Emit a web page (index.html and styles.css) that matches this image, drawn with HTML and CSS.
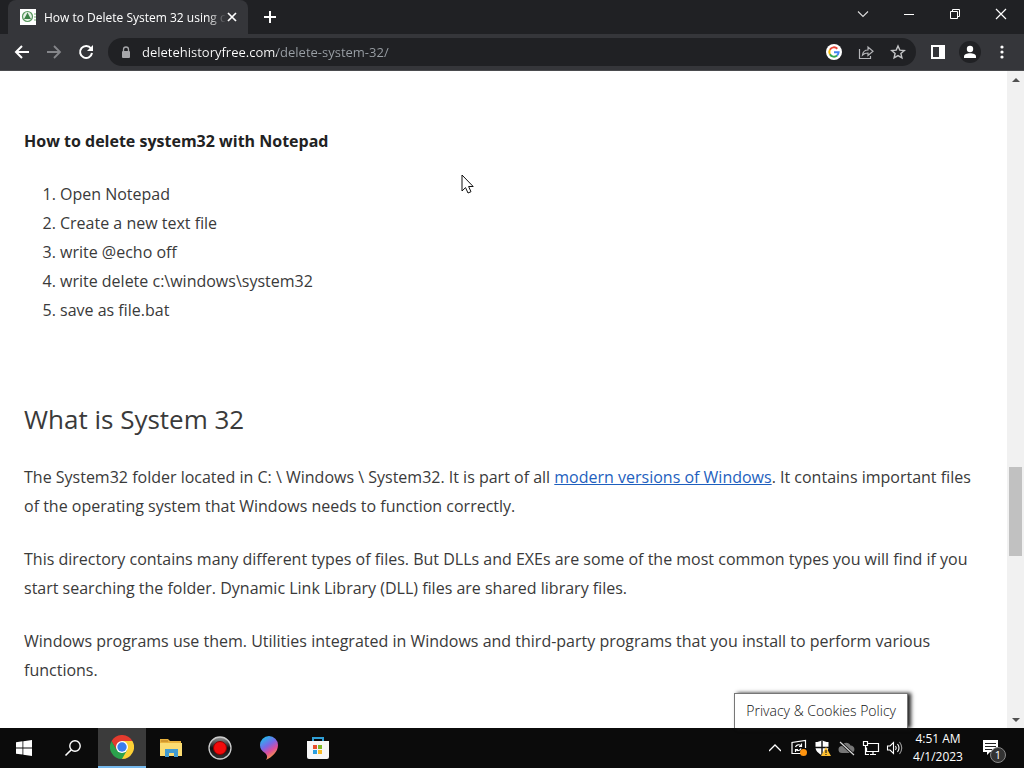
FILE: index.html
```html
<!DOCTYPE html>
<html lang="en">
<head>
    <meta charset="UTF-8">
    <meta name="viewport" content="width=device-width, initial-scale=1.0">
    <title>How to Delete System 32</title>
    <link rel="stylesheet" href="styles.css">
</head>
<body>
    <header class="tab-strip">
        <div class="tab">
            <svg class="favicon" width="16" height="16" viewBox="0 0 16 16">
                <rect width="16" height="16" fill="#fff"/>
                <circle cx="7.5" cy="7.5" r="5" fill="#e5f0e5" stroke="#5a9a60" stroke-width="1.2"/>
                <path d="M7.500 3.500L9 6.500l2 3.500H4l2-3.500z" fill="#3c8247"/>
                <path d="M15 4v8" stroke="#6fae6f" stroke-dasharray="2 1"/>
            </svg>
            <span class="tab-title">How to Delete System 32 using c</span>
            <button class="icon-button tab-close" aria-label="Close tab">
                <svg width="10" height="10" viewBox="0 0 10 10"><path d="M1 1l8 8M9 1L1 9" stroke="#fff" stroke-width="1.7"/></svg>
            </button>
        </div>
        <button class="icon-button new-tab" aria-label="New tab">
            <svg width="14" height="14" viewBox="0 0 14 14"><path d="M7 1v12M1 7h12" stroke="#fff" stroke-width="2"/></svg>
        </button>
        <div class="window-controls">
            <button class="icon-button" aria-label="Search tabs">
                <svg width="12" height="12" viewBox="0 0 12 12"><path d="M1 3.500l5 5 5-5" fill="none" stroke="#ddd" stroke-width="1.100"/></svg>
            </button>
            <button class="icon-button" aria-label="Minimize">
                <svg width="12" height="12" viewBox="0 0 12 12"><path d="M1 6.500h10" stroke="#fff"/></svg>
            </button>
            <button class="icon-button" aria-label="Restore">
                <svg width="12" height="12" viewBox="0 0 12 12"><path d="M1.500 3.500h7v7h-7zM3.500 3.500v-2h7v7h-2" fill="none" stroke="#fff"/></svg>
            </button>
            <button class="icon-button" aria-label="Close">
                <svg width="12" height="12" viewBox="0 0 12 12"><path d="M1 1l10 10M11 1L1 11" stroke="#fff" stroke-width="1.200"/></svg>
            </button>
        </div>
    </header>

    <nav class="toolbar">
        <button class="icon-button" aria-label="Back">
            <svg width="16" height="16" viewBox="0 0 16 16"><path d="M15 8H2M8 2L2 8l6 6" fill="none" stroke="#fff" stroke-width="2"/></svg>
        </button>
        <button class="icon-button" aria-label="Forward">
            <svg width="16" height="16" viewBox="0 0 16 16"><path d="M1 8h13M8 2l6 6-6 6" fill="none" stroke="#85868a" stroke-width="1.800"/></svg>
        </button>
        <button class="icon-button" aria-label="Reload">
            <svg width="16" height="16" viewBox="0 0 16 16"><path d="M13 4.500A6 6 0 1 0 14 9" fill="none" stroke="#fff" stroke-width="2"/><path d="M15 1v6H9z" fill="#fff"/></svg>
        </button>
        <div class="address-bar">
            <svg width="10" height="13" viewBox="0 0 10 13"><path d="M2.500 5V3.500a2.500 2.500 0 0 1 5 0V5" fill="none" stroke="#a6a7aa" stroke-width="1.300"/><rect x="1" y="5" width="8" height="7" rx="1" fill="#a6a7aa"/></svg>
            <input type="text" class="url" aria-label="Address" value="deletehistoryfree.com/delete-system-32/">
            <button class="icon-button" aria-label="Google">
                <svg width="16" height="16" viewBox="0 0 16 16">
                    <circle cx="8" cy="8" r="8" fill="#fff"/>
                    <g fill="none" stroke-width="2">
                        <path d="M11.300 4.700A4.700 4.700 0 0 0 3.900 5.700" stroke="#ea4335"/>
                        <path d="M3.900 5.700a4.700 4.700 0 0 0 0 4.600" stroke="#fbbc05"/>
                        <path d="M3.900 10.300a4.700 4.700 0 0 0 7.200 1.200" stroke="#34a853"/>
                        <path d="M11.100 11.500A4.700 4.700 0 0 0 12.600 8.300H8" stroke="#4285f4"/>
                    </g>
                </svg>
            </button>
            <button class="icon-button" aria-label="Share">
                <svg width="16" height="16" viewBox="0 0 16 16"><path d="M1.500 5v9.500h11V12M4.500 11c.5-3.500 2.500-5 5.500-5V3l5 4.300-5 4.200V9C7.500 9 6 9.500 4.500 11z" fill="none" stroke="#b5b6b9" stroke-width="1.200"/></svg>
            </button>
            <button class="icon-button" aria-label="Bookmark">
                <svg width="16" height="16" viewBox="0 0 16 16"><path d="M8 2l1.800 4.100 4.500.4-3.400 3 1 4.400L8 11.600l-3.900 2.300 1-4.400-3.400-3 4.500-.4z" fill="none" stroke="#c4c5c7" stroke-width="1.400"/></svg>
            </button>
        </div>
        <div class="toolbar-actions">
            <button class="icon-button" aria-label="Side panel">
                <svg width="16" height="16" viewBox="0 0 16 16"><path d="M1 1h14v14H1zM3 3v10h6V3z" fill="#fff" fill-rule="evenodd"/></svg>
            </button>
            <button class="icon-button profile" aria-label="Profile">
                <svg width="16" height="16" viewBox="0 0 16 16"><circle cx="8" cy="5" r="3.200" fill="#fff"/><path d="M2 14v-1.500C2 10.500 5 9.300 8 9.300s6 1.200 6 3.200V14z" fill="#fff"/></svg>
            </button>
            <button class="icon-button" aria-label="Menu">
                <svg width="16" height="16" viewBox="0 0 16 16"><g fill="#fff"><circle cx="8" cy="3" r="1.600"/><circle cx="8" cy="8" r="1.600"/><circle cx="8" cy="13" r="1.600"/></g></svg>
            </button>
        </div>
    </nav>

    <div class="viewport">
        <main class="article">
            <p><strong>How to delete system32 with Notepad</strong></p>
            <ol>
                <li>Open Notepad</li>
                <li>Create a new text file</li>
                <li>write @echo off</li>
                <li>write delete c:\windows\system32</li>
                <li>save as file.bat</li>
            </ol>
            <h2>What is System 32</h2>
            <p>The System32 folder located in C: \ Windows \ System32. It is part of all <a href="#">modern versions of Windows</a>. It contains important files of the operating system that Windows needs to function correctly.</p>
            <p>This directory contains many different types of files. But DLLs and EXEs are some of the most common types you will find if you start searching the folder. Dynamic Link Library (DLL) files are shared library files.</p>
            <p>Windows programs use them. Utilities integrated in Windows and third-party programs that you install to perform various functions.</p>
        </main>
        <div class="scrollbar">
            <button class="icon-button" aria-label="Scroll up">
                <svg width="8" height="4" viewBox="0 0 8 4"><path d="M0 4l4-4 4 4z" fill="#505050"/></svg>
            </button>
            <div class="track"><div class="thumb"></div></div>
            <button class="icon-button" aria-label="Scroll down">
                <svg width="8" height="4" viewBox="0 0 8 4"><path d="M0 0l4 4 4-4z" fill="#505050"/></svg>
            </button>
        </div>
        <button class="cookies">Privacy &amp; Cookies Policy</button>
        <svg class="cursor" width="13" height="20" viewBox="0 0 13 20"><path d="M1 1v16l3.500-3.400L7 19l3-1.300-2.400-5.200h4.600z" fill="#fff" stroke="#111"/></svg>
    </div>

    <footer class="taskbar">
        <button class="task" aria-label="Start">
            <svg width="16" height="16" viewBox="0 0 16 16"><path d="M0 2.200L6.500 1.300v6.200H0zM7.300 1.200L16 0v7.500H7.300zM0 8.400h6.500v6.200L0 13.700zM7.300 8.400H16V16l-8.700-1.200z" fill="#fff"/></svg>
        </button>
        <button class="task" aria-label="Search">
            <svg width="18" height="18" viewBox="0 0 18 18"><circle cx="11" cy="7" r="5.200" fill="none" stroke="#fff" stroke-width="1.400"/><path d="M7.300 10.700L1.500 16.500" stroke="#fff" stroke-width="1.600"/></svg>
        </button>
        <button class="task active" aria-label="Chrome">
            <svg width="24" height="24" viewBox="0 0 24 24">
                <path d="M12 12L1.600 6A12 12 0 0 1 22.400 6z" fill="#e33b2e"/>
                <path d="M12 12V6h10.400A12 12 0 0 1 12 24z" fill="#fdd035"/>
                <path d="M12 12l5.200 3L12 24A12 12 0 0 1 1.600 6l5.200 9z" fill="#2ba24c"/>
                <path d="M1.600 6h10.400v6l-5.200 3z" fill="#e33b2e"/>
                <circle cx="12" cy="12" r="6" fill="#fff"/>
                <circle cx="12" cy="12" r="4.700" fill="#3b7ded"/>
            </svg>
        </button>
        <button class="task" aria-label="File Explorer">
            <svg width="22" height="20" viewBox="0 0 22 20"><path d="M0 1h8l2 2h11v15H0z" fill="#e9b23c"/><path d="M0 5h22v13H0z" fill="#fbdc72"/><path d="M5 19v-8h13v8h-4v-4H9v4z" fill="#419bd1"/><path d="M1 3h7" stroke="#b97d22"/></svg>
        </button>
        <button class="task" aria-label="Recorder">
            <svg width="24" height="24" viewBox="0 0 24 24">
                <defs><linearGradient id="rec" x2="0" y2="1"><stop stop-color="#999"/><stop offset=".5" stop-color="#111"/><stop offset="1" stop-color="#333"/></linearGradient></defs>
                <circle cx="12" cy="12" r="11" fill="url(#rec)" stroke="#ccc" stroke-width="1.300"/>
                <circle cx="12" cy="12" r="6.500" fill="#f20b0b" stroke="#8f0000"/>
            </svg>
        </button>
        <button class="task" aria-label="Paint 3D">
            <svg width="20" height="24" viewBox="0 0 20 24">
                <defs><linearGradient id="paint" x1=".2" y1="0" x2=".7" y2="1"><stop stop-color="#19c3ee"/><stop offset=".4" stop-color="#7868e8"/><stop offset=".65" stop-color="#dd4c9b"/><stop offset="1" stop-color="#ffb52b"/></linearGradient></defs>
                <path d="M10 0a9 9 0 0 1 9 9c0 7-6 12-12 15 2-3 1-5-1-7-3-2-5-4-5-8a9 9 0 0 1 9-9z" fill="url(#paint)"/>
            </svg>
        </button>
        <button class="task" aria-label="Microsoft Store">
            <svg width="24" height="24" viewBox="0 0 24 24">
                <path d="M7 6V2h10v4" fill="none" stroke="#2f9fd6" stroke-width="2"/>
                <path d="M1 5h22v16q0 2-2 2H3q-2 0-2-2z" fill="#f7f7f7"/>
                <path d="M7 9h4v4H7z" fill="#e8502e"/><path d="M12 9h4v4h-4z" fill="#7eb927"/>
                <path d="M7 14h4v4H7z" fill="#2a9fe0"/><path d="M12 14h4v4h-4z" fill="#f8bb28"/>
            </svg>
        </button>
        <div class="tray">
            <button class="icon-button tray-more" aria-label="Show hidden icons">
                <svg width="12" height="8" viewBox="0 0 12 8"><path d="M0 7l6-6 6 6" fill="none" stroke="#fff" stroke-width="1.300"/></svg>
            </button>
            <button class="icon-button" aria-label="Windows Update">
                <svg width="18" height="18" viewBox="0 0 18 18"><path d="M15.500 9V1.500L2 3.500v11h9" fill="none" stroke="#fff" stroke-width="1.200"/><path d="M5.500 8c1-2.500 4-3 5.500-1M11.500 4.500v3H9M11 9.500c-1 2.500-4 2.500-5 1M5.500 13v-2.500H8" fill="none" stroke="#fff" stroke-width="1.200"/><circle cx="13.500" cy="13.500" r="3.500" fill="#ff940f"/></svg>
            </button>
            <button class="icon-button" aria-label="Windows Security">
                <svg width="18" height="18" viewBox="0 0 18 18"><path d="M8 1c2 1.500 4 2 6.500 2v5c0 4-3 6.500-6.500 8-3.500-1.500-6.500-4-6.500-8V3C4 3 6 2.500 8 1z" fill="#fff"/><path d="M8 1v15M1 8.500h14" stroke="#111" stroke-width="1.400"/><path d="M12 8l5 9H7z" fill="#ffc02e"/><path d="M12 11v3M12 15v1" stroke="#222" stroke-width="1.200"/></svg>
            </button>
            <button class="icon-button" aria-label="OneDrive">
                <svg width="18" height="18" viewBox="0 0 18 18"><path d="M4 14a3.500 3.500 0 0 1 0-7c1-4 7-4.500 8.500-.5 5 0 5.500 7.500 0 7.500z" fill="#777"/><path d="M2 3l14 13" stroke="#111" stroke-width="3"/><path d="M2 3l14 13" stroke="#ddd" stroke-width="1.100"/></svg>
            </button>
            <button class="icon-button" aria-label="Network">
                <svg width="18" height="18" viewBox="0 0 18 18"><path d="M6 4.500h10.500v8H4.500v-4M8 15.500h6M11 12.500v3M1.500 2.500h4v4h-4zM3.500 6.500v9H7" fill="none" stroke="#fff" stroke-width="1.200"/></svg>
            </button>
            <button class="icon-button" aria-label="Volume">
                <svg width="18" height="18" viewBox="0 0 18 18"><path d="M1.500 7H4l3.500-3.500v11L4 11H1.500z" fill="none" stroke="#fff" stroke-width="1.100"/><path d="M9.500 7q1.500 2 0 4M11.500 5q3 4 0 8" fill="none" stroke="#fff" stroke-width="1.100"/><path d="M13.500 3q4.500 6 0 12" fill="none" stroke="#999" stroke-width="1.100"/></svg>
            </button>
        </div>
        <button class="clock"><span>4:51 AM</span><span>4/1/2023</span></button>
        <button class="notifications" aria-label="Notifications">
            <svg width="18" height="18" viewBox="0 0 18 18"><path d="M1 1h15v12H8l-3 3v-3H1z" fill="#fff"/><path d="M3 4.500h11M3 7.500h11M3 10.500h7" stroke="#222"/></svg>
            <span class="badge">1</span>
        </button>
    </footer>
</body>
</html>
```

FILE: styles.css
```css
* {
    box-sizing: border-box;
}

body {
    margin: 0;
    height: 100vh;
    display: flex;
    flex-direction: column;
    overflow: hidden;
    font-family: "Open Sans", sans-serif;
    font-size: 16px;
    line-height: 29px;
    color: #3a3a3a;
    background: #fff;
}

button {
    padding: 0;
    border: none;
    background: transparent;
    color: inherit;
    font: inherit;
}

svg {
    display: block;
    flex: none;
}

.icon-button {
    display: flex;
    align-items: center;
    justify-content: center;
}

/* Browser */
.tab-strip {
    display: flex;
    flex: none;
    height: 34px;
    background: #202124;
    color: #fff;
}

.tab {
    display: flex;
    align-items: center;
    width: 240px;
    margin-left: 8px;
    padding: 0 9px 0 12px;
    border-radius: 8px 8px 0 0;
    background: #35363a;
}

.tab-title {
    flex: 1;
    margin-left: 8px;
    white-space: nowrap;
    font-size: 12px;
    -webkit-mask-image: linear-gradient(90deg, #000 90%, transparent);
    mask-image: linear-gradient(90deg, #000 90%, transparent);
}

.tab-close {
    width: 14px;
    height: 16px;
}

.new-tab {
    width: 28px;
    margin-left: 8px;
}

.window-controls {
    display: flex;
    margin-left: auto;
    height: 28px;
}

.window-controls button {
    width: 46px;
}

.toolbar {
    display: flex;
    flex: none;
    align-items: center;
    gap: 16px;
    height: 37px;
    padding: 0 14px;
    background: #35363a;
    border-bottom: 1px solid #4a4b4e;
}

.address-bar {
    display: flex;
    flex: 1;
    align-items: center;
    gap: 16px;
    height: 28px;
    margin: 0 -2px;
    padding: 0 10px 0 13px;
    border-radius: 14px;
    background: #202124;
}

.url {
    flex: 1;
    min-width: 0;
    margin-left: -5px;
    padding: 0;
    border: none;
    outline: none;
    font: 13px/20px "Open Sans", sans-serif;
    color: transparent;
    /* host in white, path in grey */
    background: linear-gradient(90deg, #fff 135px, #9aa0a6 135px);
    -webkit-background-clip: text;
    background-clip: text;
}

.toolbar-actions {
    display: flex;
    align-items: center;
    gap: 16px;
}

.profile {
    width: 22px;
    height: 22px;
    margin: 0 -3px;
    border-radius: 50%;
    background: #202124;
}

.viewport {
    position: relative;
    display: flex;
    flex: 1;
    min-height: 0;
}

.article {
    flex: 1;
    padding: 56px 24px 0;
    overflow: hidden;
}

.article p {
    margin: 0 0 24px;
}

.article strong {
    color: #222;
}

.article ol {
    margin: 0 0 75px;
    padding-left: 36px;
}

.article h2 {
    margin: 0 0 24px;
    font-size: 26px;
    font-weight: 400;
    line-height: 39px;
}

.article a {
    color: #1e5fbe;
}

.scrollbar {
    display: flex;
    flex: none;
    flex-direction: column;
    width: 17px;
    background: #f1f1f1;
}

.scrollbar button {
    height: 17px;
}

.track {
    flex: 1;
    padding: 0 2px;
    display: flex;
    flex-direction: column;
}

.track::before {
    content: "";
    flex: 380;
}

.track::after {
    content: "";
    flex: 155;
}

.thumb {
    flex: 89;
    background: #c1c1c1;
}

.cookies {
    position: absolute;
    right: 116px;
    bottom: 0;
    padding: 0 11px 1px;
    height: 35px;
    border: 1px solid #777;
    border-bottom: none;
    background: #fff;
    box-shadow: 3px 0 4px #222;
    font-size: 14px;
    font-weight: 300;
    color: #111;
}

.cursor {
    position: absolute;
    left: 461px;
    top: 103px;
}

/* Taskbar */
.taskbar {
    display: flex;
    flex: none;
    height: 40px;
    background: #0b0b0b;
    color: #fff;
    font-size: 12px;
    line-height: 18px;
}

.task {
    display: flex;
    align-items: center;
    justify-content: center;
    width: 48px;
    margin-right: 1px;
}

.task.active {
    background: #3b3b3b;
    border-bottom: 2px solid #76b9ed;
}

.tray {
    display: flex;
    align-items: center;
    gap: 6px;
    margin-left: auto;
}

.tray-more {
    margin-right: 3px;
}

.clock {
    display: flex;
    flex-direction: column;
    align-items: center;
    justify-content: center;
    width: 68px;
}

.notifications {
    position: relative;
    width: 48px;
    padding-left: 10px;
    margin-right: 4px;
}

.badge {
    position: absolute;
    left: 18px;
    bottom: 5px;
    width: 16px;
    height: 16px;
    border: 1px solid #888;
    border-radius: 50%;
    background: #333;
    font-size: 11px;
    line-height: 14px;
}
```
